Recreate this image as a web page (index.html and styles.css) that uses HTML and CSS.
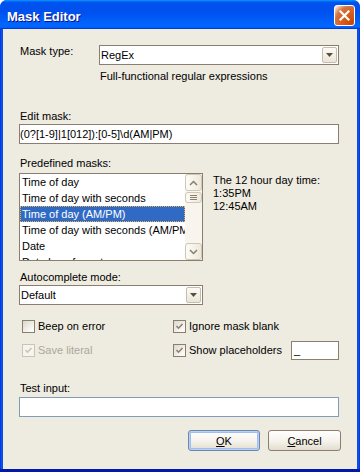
FILE: index.html
```html
<!DOCTYPE html>
<html lang="en">
<head>
    <meta charset="UTF-8">
    <title>Mask Editor</title>
    <link rel="stylesheet" href="styles.css">
</head>
<body>
    <div class="window">
        <div class="titlebar">
            <span class="title">Mask Editor</span>
            <span class="close-btn">
                <svg width="11" height="11" viewBox="0 0 11 11"><path d="M1.5 1.5 L9.5 9.5 M9.5 1.5 L1.5 9.5" stroke="#fff" stroke-width="2.2" stroke-linecap="square"/></svg>
            </span>
        </div>
        <div class="client">
            <div class="type-row">
                <span class="type-label">Mask type:</span>
                <div class="type-col">
                    <div class="combo">
                        <span class="combo-text">RegEx</span>
                        <span class="combo-btn"><svg width="7" height="4" viewBox="0 0 7 4"><path d="M0 0 H7 L3.5 4 Z" fill="#5a4e42"/></svg></span>
                    </div>
                    <div class="type-desc">Full-functional regular expressions</div>
                </div>
            </div>

            <div class="field-label label-edit">Edit mask:</div>
            <div class="textbox">(0?[1-9]|1[012]):[0-5]\d(AM|PM)</div>

            <div class="field-label label-predef">Predefined masks:</div>
            <div class="predef-row">
                <div class="listbox">
                    <ul class="list-items">
                        <li>Time of day</li>
                        <li>Time of day with seconds</li>
                        <li class="selected">Time of day (AM/PM)</li>
                        <li>Time of day with seconds (AM/PM)</li>
                        <li>Date</li>
                        <li>Date long format</li>
                    </ul>
                    <div class="scrollbar">
                        <span class="sb-btn"><svg width="9" height="6" viewBox="0 0 9 6"><path d="M1 5 L4.5 1.5 L8 5" fill="none" stroke="#8b7d70" stroke-width="1.5"/></svg></span>
                        <span class="sb-thumb"><i></i><i></i><i></i></span>
                        <span class="sb-track"></span>
                        <span class="sb-btn"><svg width="9" height="6" viewBox="0 0 9 6"><path d="M1 1 L4.5 4.5 L8 1" fill="none" stroke="#8b7d70" stroke-width="1.5"/></svg></span>
                    </div>
                </div>
                <div class="sample">The 12 hour day time:<br>1:35PM<br>12:45AM</div>
            </div>

            <div class="field-label label-auto">Autocomplete mode:</div>
            <div class="combo combo-auto">
                <span class="combo-text">Default</span>
                <span class="combo-btn"><svg width="7" height="4" viewBox="0 0 7 4"><path d="M0 0 H7 L3.5 4 Z" fill="#5a4e42"/></svg></span>
            </div>

            <div class="check-grid">
                <div class="check-item col-left">
                    <span class="check"></span>
                    <span class="check-text">Beep on error</span>
                </div>
                <div class="check-item">
                    <span class="check"><svg width="11" height="11" viewBox="0 0 11 11"><path d="M2.5 5 L4.5 7.2 L8.5 3" fill="none" stroke="#8b8073" stroke-width="1.6"/></svg></span>
                    <span class="check-text">Ignore mask blank</span>
                </div>
                <div class="check-item col-left disabled">
                    <span class="check"><svg width="11" height="11" viewBox="0 0 11 11"><path d="M2.5 5 L4.5 7.2 L8.5 3" fill="none" stroke="#cac4b8" stroke-width="1.6"/></svg></span>
                    <span class="check-text">Save literal</span>
                </div>
                <div class="check-item">
                    <span class="check"><svg width="11" height="11" viewBox="0 0 11 11"><path d="M2.5 5 L4.5 7.2 L8.5 3" fill="none" stroke="#8b8073" stroke-width="1.6"/></svg></span>
                    <span class="check-text">Show placeholders</span>
                    <span class="placeholder-box">_</span>
                </div>
            </div>

            <div class="field-label label-test">Test input:</div>
            <div class="textbox test-box"></div>

            <div class="button-row">
                <button class="btn btn-ok" type="button"><u>O</u>K</button>
                <button class="btn" type="button"><u>C</u>ancel</button>
            </div>
        </div>
    </div>
</body>
</html>
```
FILE: styles.css
```css
body {
    margin: 0;
    background: #fff;
    font-family: "Liberation Sans", Arial, sans-serif;
    font-size: 11px;
    color: #000;
}

/* window frame */
.window {
    width: 360px;
    height: 472px;
    display: flex;
    flex-direction: column;
    border-radius: 7px 7px 0 0;
    overflow: hidden;
    background: linear-gradient(90deg, #0831d9, #0a5bf0 2px, #0842d9 3px, #0842d9 357px, #0a5bf0 358px, #0831d9);
    box-sizing: border-box;
    border-bottom: 3px solid #0019a8;
}

.titlebar {
    height: 29px;
    flex: none;
    display: flex;
    align-items: center;
    justify-content: space-between;
    padding: 2px 5px 0 7px;
    box-sizing: border-box;
    background: linear-gradient(180deg, #0997ff, #0053ee 8%, #0050ee 40%, #06f 88%, #06f 93%, #005bff 95%, #003dd7 96%, #003dd7);
}

.title {
    color: #fff;
    font-weight: bold;
    font-size: 13px;
    text-shadow: 1px 1px #0f1089;
    margin-top: 1px;
}

.close-btn {
    width: 21px;
    height: 21px;
    box-sizing: border-box;
    border: 1px solid #fff;
    border-radius: 3px;
    display: flex;
    align-items: center;
    justify-content: center;
    background: radial-gradient(circle at 90% 90%, #cc4600 0%, #dc6527 55%, #cd7546 70%, #ffccb2 90%, #fff 100%);
}

.client {
    flex: 1;
    margin: 0 3px;
    background: #eeebe0;
    padding: 16px 18px 0 16px;
    display: flex;
    flex-direction: column;
}

/* mask type */
.type-row {
    display: flex;
}

.type-label {
    width: 80px;
    padding-left: 1px;
    box-sizing: border-box;
    line-height: 13px;
}

.type-col {
    flex: 1;
}

.type-desc {
    margin-top: 5px;
    padding-left: 1px;
    line-height: 13px;
}

.combo {
    display: flex;
    align-items: center;
    height: 20px;
    box-sizing: border-box;
    border: 1px solid #8b7d70;
    background: #fff;
    padding: 1px 1px 1px 0;
}

.combo-text {
    flex: 1;
    padding-left: 1px;
}

.combo-btn {
    width: 15px;
    height: 16px;
    box-sizing: border-box;
    border: 1px solid #c7bcab;
    border-radius: 2px;
    background: linear-gradient(180deg, #fbfaf5, #ebe5d6);
    display: flex;
    align-items: center;
    justify-content: center;
}

.combo-auto {
    width: 184px;
    margin-top: 1px;
}

/* labels and edits */
.field-label {
    line-height: 13px;
    padding-left: 1px;
}

.label-edit {
    margin-top: 27px;
}

.label-predef {
    margin-top: 13px;
}

.label-auto {
    margin-top: 10px;
}

.label-test {
    margin-top: 20px;
}

.textbox {
    height: 20px;
    box-sizing: border-box;
    border: 1px solid #8b7d70;
    background: #fff;
    line-height: 18px;
    margin-top: 1px;
    white-space: nowrap;
}

.test-box {
    border-color: #7f9db9;
    margin-top: 2px;
}

/* predefined masks */
.predef-row {
    display: flex;
    margin-top: 3px;
}

.listbox {
    width: 184px;
    height: 88px;
    box-sizing: border-box;
    border: 1px solid #8b7d70;
    background: #fff;
    display: flex;
}

.list-items {
    flex: 1;
    margin: 0;
    padding: 0;
    list-style: none;
    overflow: hidden;
}

.list-items li {
    height: 16px;
    line-height: 16px;
    padding-left: 2px;
    white-space: nowrap;
}

.list-items li.selected {
    background: #316ac5;
    color: #fff;
    outline: 1px dotted #e8b53c;
    outline-offset: -1px;
}

.scrollbar {
    width: 17px;
    flex: none;
    display: flex;
    flex-direction: column;
    background: #f7f5ee;
}

.sb-btn,
.sb-thumb {
    height: 17px;
    box-sizing: border-box;
    border: 1px solid #cfc6b4;
    border-radius: 3px;
    background: linear-gradient(90deg, #fdfcf8, #ede8da);
    display: flex;
    align-items: center;
    justify-content: center;
}

.sb-thumb {
    height: 11px;
    margin-top: 1px;
    flex-direction: column;
    gap: 1px;
}

.sb-thumb i {
    width: 7px;
    height: 1px;
    background: #8b7d70;
}

.sb-track {
    flex: 1;
}

.sample {
    margin-left: 10px;
    padding-top: 1px;
    line-height: 13px;
}

/* check boxes */
.check-grid {
    display: grid;
    grid-template-columns: 154px 166px;
    grid-auto-rows: 24px;
    margin-top: 9px;
}

.check-item {
    display: flex;
    align-items: center;
}

.col-left {
    padding-left: 3px;
}

.check {
    width: 13px;
    height: 13px;
    box-sizing: border-box;
    border: 1px solid #8b7d70;
    background: linear-gradient(135deg, #dcd7cb, #fbfaf7 80%);
    display: flex;
    align-items: center;
    justify-content: center;
}

.check-text {
    margin-left: 3px;
}

.disabled .check {
    border-color: #cac4b8;
    background: #f5f4ee;
}

.disabled .check-text {
    color: #aca899;
}

.placeholder-box {
    margin-left: auto;
    width: 48px;
    height: 19px;
    box-sizing: border-box;
    border: 1px solid #8b7d70;
    background: #fff;
    padding-left: 2px;
    line-height: 17px;
}

/* buttons */
.button-row {
    display: flex;
    justify-content: flex-end;
    gap: 8px;
    margin-top: 13px;
    margin-right: -2px;
}

.btn {
    width: 73px;
    height: 21px;
    box-sizing: border-box;
    border: 1px solid #8b7d70;
    border-radius: 3px;
    background: linear-gradient(180deg, #fff, #f4f2ea 55%, #e3ddcf);
    font-family: "Liberation Sans", Arial, sans-serif;
    font-size: 11px;
    color: #000;
    padding: 0;
}

.btn-ok {
    width: 72px;
    border-color: #6f86a8;
    box-shadow: inset 0 0 0 1px #b9d1f5, inset 0 0 0 2px #9ebdf0;
}
```
